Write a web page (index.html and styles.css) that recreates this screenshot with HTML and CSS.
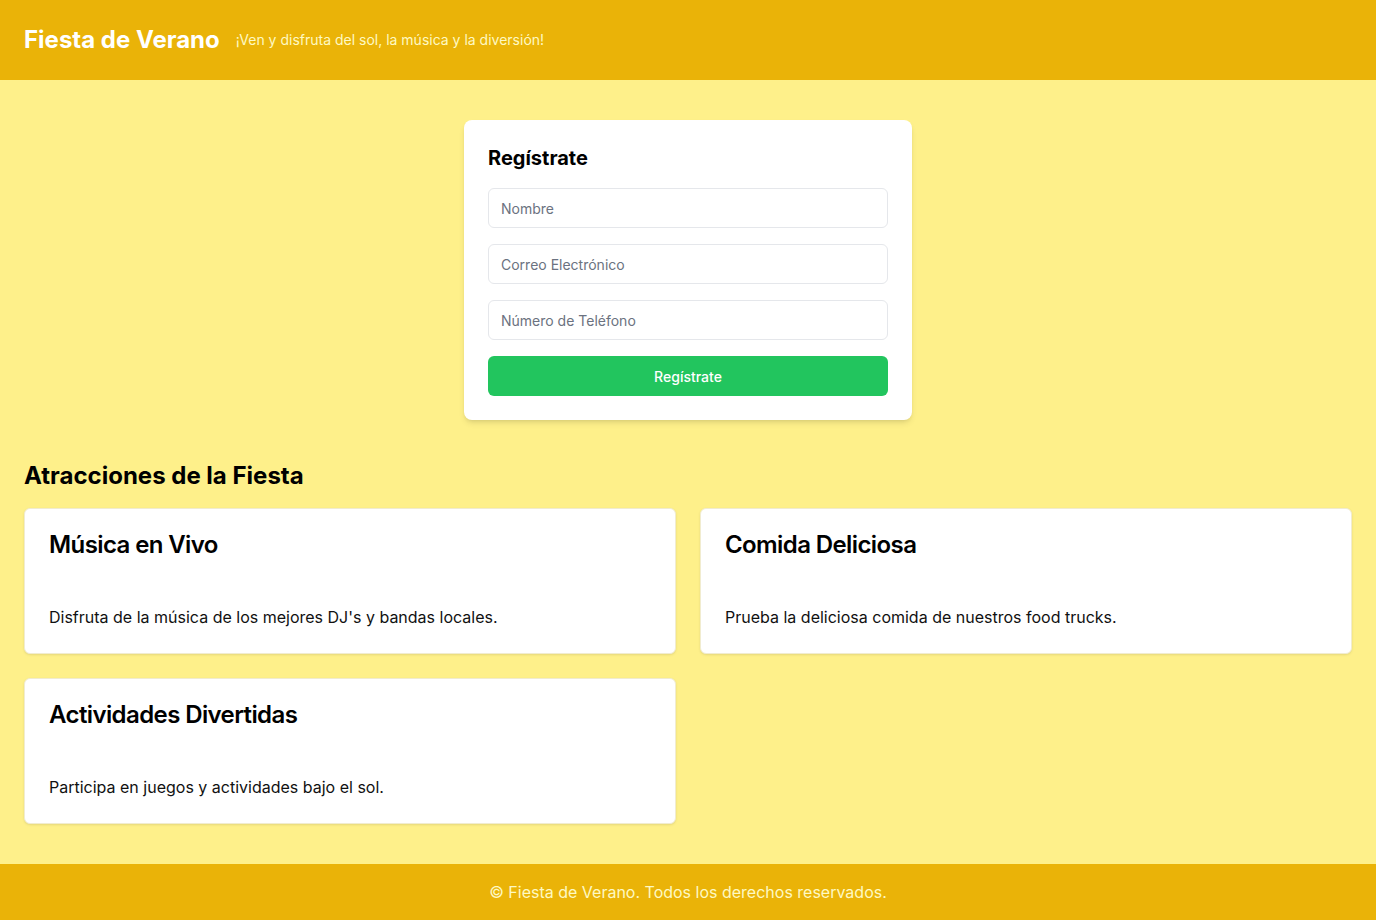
FILE: index.html
```html
<!DOCTYPE html>
<html lang="es">
<head>
<meta charset="utf-8">
<title>Fiesta de Verano</title>
<link rel="stylesheet" href="styles.css">
</head>
<body>
<header class="site-header">
  <h1 class="brand">Fiesta de Verano</h1>
  <p class="tagline">¡Ven y disfruta del sol, la música y la diversión!</p>
</header>
<main class="main">
  <section class="form-card">
    <h2 class="form-title">Regístrate</h2>
    <form class="form">
      <input class="field" type="text" placeholder="Nombre">
      <input class="field" type="email" placeholder="Correo Electrónico">
      <input class="field" type="tel" placeholder="Número de Teléfono">
      <button class="submit" type="button">Regístrate</button>
    </form>
  </section>
  <section class="attractions">
    <h2 class="section-title">Atracciones de la Fiesta</h2>
    <div class="grid">
      <article class="card">
        <h3 class="card-title">Música en Vivo</h3>
        <p class="card-text">Disfruta de la música de los mejores DJ's y bandas locales.</p>
      </article>
      <article class="card">
        <h3 class="card-title">Comida Deliciosa</h3>
        <p class="card-text">Prueba la deliciosa comida de nuestros food trucks.</p>
      </article>
      <article class="card">
        <h3 class="card-title">Actividades Divertidas</h3>
        <p class="card-text">Participa en juegos y actividades bajo el sol.</p>
      </article>
    </div>
  </section>
</main>
<footer class="site-footer">
  <p>© Fiesta de Verano. Todos los derechos reservados.</p>
</footer>
</body>
</html>
```
FILE: styles.css
```css
* { box-sizing: border-box; margin: 0; padding: 0; }
html, body { height: 100%; }
body {
  font-family: Inter, "Noto Sans", sans-serif;
  background: #fef08a;
  color: #111;
  display: flex;
  flex-direction: column;
  min-height: 100vh;
}
.site-header {
  background: #eab308;
  padding: 24px;
  display: flex;
  align-items: center;
  height: 80px;
}
.brand {
  font-size: 24px;
  line-height: 32px;
  font-weight: 700;
  color: #fff;
}
.tagline {
  margin-left: 16px;
  font-size: 14px;
  line-height: 20px;
  color: #fef9c3;
}
.main {
  flex: 1;
  padding: 40px 24px 40px;
}
.form-card {
  width: 448px;
  margin: 0 auto;
  background: #fff;
  border-radius: 8px;
  padding: 24px;
  box-shadow: 0 4px 6px -1px rgba(0,0,0,.1), 0 2px 4px -2px rgba(0,0,0,.1);
}
.form-title {
  font-size: 20px;
  line-height: 28px;
  font-weight: 700;
  color: #000;
  margin-bottom: 16px;
}
.form {
  display: flex;
  flex-direction: column;
  gap: 16px;
}
.field {
  height: 40px;
  padding: 0 12px;
  border: 1px solid #e5e7eb;
  border-radius: 6px;
  font-family: inherit;
  font-size: 14px;
  color: #111;
  outline: none;
}
.field::placeholder { color: #6b7280; }
.submit {
  height: 40px;
  border: 0;
  border-radius: 6px;
  background: #22c55e;
  color: #fff;
  font-family: inherit;
  font-size: 14px;
  font-weight: 500;
}
.attractions { margin-top: 40px; }
.section-title {
  font-size: 24px;
  line-height: 32px;
  font-weight: 700;
  color: #000;
  margin-bottom: 16px;
}
.grid {
  display: grid;
  grid-template-columns: 1fr 1fr;
  gap: 24px;
}
.card {
  background: #fff;
  border: 1px solid #f1ecd0;
  border-radius: 6px;
  padding: 24px;
  height: 146px;
  box-shadow: 0 1px 3px 0 rgba(0,0,0,.08), 0 1px 2px -1px rgba(0,0,0,.08);
  display: flex;
  flex-direction: column;
  justify-content: space-between;
}
.card-title {
  font-size: 24px;
  line-height: 24px;
  font-weight: 600;
  letter-spacing: -0.6px;
  color: #000;
}
.card-text {
  font-size: 16px;
  line-height: 24px;
  color: #111;
}
.site-footer {
  background: #eab308;
  height: 56px;
  display: flex;
  align-items: center;
  justify-content: center;
  color: #fef9c3;
  font-size: 16px;
}
```
